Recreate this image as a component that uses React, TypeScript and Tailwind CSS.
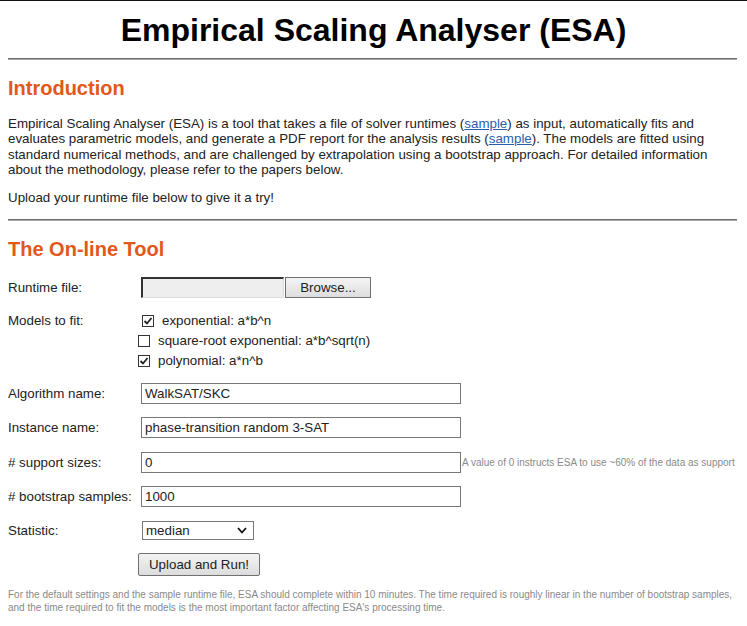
import { ReactNode } from 'react'

function Rule({ className = '' }: { className?: string }) {
  return (
    <div
      className={`h-[2px] border-t border-[#6e6e6e] border-b border-b-[#a8a8a8] mr-[2px] ${className}`}
    />
  )
}

function Row({
  label,
  className = '',
  children,
}: {
  label: string
  className?: string
  children: ReactNode
}) {
  return (
    <div className={`flex items-center h-[21px] ${className}`}>
      <div className="w-[133px] shrink-0">{label}</div>
      {children}
    </div>
  )
}

function TextBox({ value }: { value: string }) {
  return (
    <div className="w-[320px] h-[21px] border border-[#777] bg-white pl-[3px] flex items-center leading-none">
      {value}
    </div>
  )
}

function Check({ checked }: { checked: boolean }) {
  return (
    <span className="w-[12px] h-[12px] border border-[#333] bg-white flex items-center justify-center shrink-0">
      {checked && (
        <svg width="10" height="10" viewBox="0 0 10 10">
          <path
            d="M1.5 5 L4 7.5 L8.5 2"
            fill="none"
            stroke="#222"
            strokeWidth="1.8"
          />
        </svg>
      )}
    </span>
  )
}

export default function App() {
  return (
    <div className="min-h-[626px] bg-white border-t border-[#111] px-2 font-['Liberation_Sans',Arial,sans-serif] text-[13.33px] text-[#222]">
      <h1 className="mt-[11px] text-center text-[32px] leading-[37px] font-bold text-black">
        Empirical Scaling Analyser (ESA)
      </h1>
      <Rule className="mt-[9px]" />

      <h2 className="mt-[16px] text-[20px] leading-[24px] font-bold text-[#e2581b]">
        Introduction
      </h2>
      <p className="mt-[16px] leading-[15.3px]">
        Empirical Scaling Analyser (ESA) is a tool that takes a file of solver
        runtimes (<a className="text-[#2a5db0] underline">sample</a>) as input,
        automatically fits and
        <br />
        evaluates parametric models, and generate a PDF report for the analysis
        results (<a className="text-[#2a5db0] underline">sample</a>). The models
        are fitted using
        <br />
        standard numerical methods, and are challenged by extrapolation using a
        bootstrap approach. For detailed information
        <br />
        about the methodology, please refer to the papers below.
      </p>
      <p className="mt-[13px] leading-[15px]">
        Upload your runtime file below to give it a try!
      </p>
      <Rule className="mt-[14px]" />

      <h2 className="mt-[16px] text-[20px] leading-[24px] font-bold text-[#e2581b]">
        The On-line Tool
      </h2>

      <Row label="Runtime file:" className="mt-[16px]">
        <div className="w-[143px] h-[21px] bg-[#eeeeee] border-t-2 border-l-2 border-[#333] border-b border-r border-b-[#ddd] border-r-[#ddd]" />
        <button className="ml-[1px] w-[86px] h-[21px] border border-[#707070] bg-gradient-to-b from-[#f4f4f4] to-[#dedede] text-[13.33px] leading-none">
          Browse...
        </button>
      </Row>

      <div className="mt-[13px] flex">
        <div className="w-[130px] shrink-0 leading-[20px]">Models to fit:</div>
        <div className="flex flex-col">
          <div className="h-[20px] flex items-center pl-[4px]">
            <Check checked />
            <span className="ml-[8px]">exponential: a*b^n</span>
          </div>
          <div className="h-[20px] flex items-center">
            <Check checked={false} />
            <span className="ml-[8px]">square-root exponential: a*b^sqrt(n)</span>
          </div>
          <div className="h-[20px] flex items-center">
            <Check checked />
            <span className="ml-[8px]">polynomial: a*n^b</span>
          </div>
        </div>
      </div>

      <Row label="Algorithm name:" className="mt-[12px]">
        <TextBox value="WalkSAT/SKC" />
      </Row>
      <Row label="Instance name:" className="mt-[13px]">
        <TextBox value="phase-transition random 3-SAT" />
      </Row>
      <Row label="# support sizes:" className="mt-[14px]">
        <TextBox value="0" />
        <span className="ml-[1px] text-[10px] text-[#8a8a8a] whitespace-nowrap">
          A value of 0 instructs ESA to use ~60% of the data as support
        </span>
      </Row>
      <Row label="# bootstrap samples:" className="mt-[13px]">
        <TextBox value="1000" />
      </Row>

      <div className="mt-[14px] flex items-center h-[19px]">
        <div className="w-[134px] shrink-0">Statistic:</div>
        <div className="w-[112px] h-[19px] border border-[#777] bg-white flex items-center justify-between pl-[3px] pr-[6px]">
          <span>median</span>
          <svg width="10" height="7" viewBox="0 0 10 7">
            <path d="M1 1 L5 5.5 L9 1" fill="none" stroke="#111" strokeWidth="1.8" />
          </svg>
        </div>
      </div>

      <div className="mt-[13px] pl-[130px]">
        <button className="w-[122px] h-[23px] border border-[#707070] rounded-[2px] bg-gradient-to-b from-[#f4f4f4] to-[#dcdcdc] text-[13.33px] leading-none">
          Upload and Run!
        </button>
      </div>

      <p className="mt-[12px] text-[10px] leading-[13px] text-[#8a8a8a]">
        For the default settings and the sample runtime file, ESA should complete
        within 10 minutes. The time required is roughly linear in the number of
        bootstrap samples,
        <br />
        and the time required to fit the models is the most important factor
        affecting ESA's processing time.
      </p>
    </div>
  )
}
